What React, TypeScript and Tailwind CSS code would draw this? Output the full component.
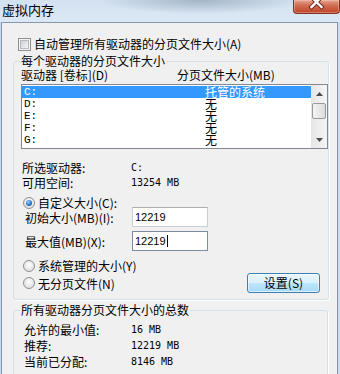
import React from "react";

const cjk = "font-['Noto_Sans_CJK_SC',sans-serif]";
const mono = "font-['DejaVu_Sans_Mono',monospace] text-[10px]";

function Checkbox() {
  return (
    <span className="block w-[13px] h-[13px] shrink-0 border border-[#8e8f8f] bg-[#f4f4f4] p-[1px]">
      <span className="block w-full h-full border border-[#b6babf] bg-[linear-gradient(135deg,#cbd0d6,#f6f6f6)]" />
    </span>
  );
}

function Radio({ checked = false }: { checked?: boolean }) {
  return (
    <span className="flex items-center justify-center w-[12px] h-[12px] shrink-0 rounded-full border border-[#8e8f8f] bg-[radial-gradient(circle_at_50%_40%,#ffffff,#d6d6d6)]">
      {checked && (
        <span className="block w-[6px] h-[6px] rounded-full bg-[radial-gradient(circle_at_40%_35%,#9fd2ff,#2775c9_55%,#0d3f7a)]" />
      )}
    </span>
  );
}

function Arrow({ up }: { up?: boolean }) {
  return (
    <svg width="7" height="4" viewBox="0 0 7 4">
      <path d={up ? "M0 4 L3.5 0 L7 4 Z" : "M0 0 L3.5 4 L7 0 Z"} fill="#4d4d4d" />
    </svg>
  );
}

function TitleBar() {
  return (
    <div className="h-[22px] flex justify-between items-start bg-[radial-gradient(ellipse_100px_14px_at_200px_0px,#a3b5c8,transparent),linear-gradient(#d3e1f0,#dce8f5)]">
      <span className="pl-[2px] text-[13px] leading-[20px] text-black">虚拟内存</span>
      <div className="w-[47px] h-[14px] rounded-b-[4px] border border-t-0 border-[#7d3426] bg-[linear-gradient(#e6a593,#d06a4f_45%,#c0432a)] shadow-[inset_0_0_0_1px_rgba(255,220,200,0.35)]">
        <svg width="45" height="13" viewBox="0 0 45 13">
          <path d="M17.5 -3 L27.5 7 M27.5 -3 L17.5 7" stroke="#6a2519" strokeWidth="4.2" strokeLinecap="square" />
          <path d="M17.5 -3 L27.5 7 M27.5 -3 L17.5 7" stroke="#ffffff" strokeWidth="2.4" strokeLinecap="square" />
        </svg>
      </div>
    </div>
  );
}

const drives = [
  { d: "C:", size: "托管的系统", sel: true },
  { d: "D:", size: "无" },
  { d: "E:", size: "无" },
  { d: "F:", size: "无" },
  { d: "G:", size: "无" },
];

function DriveList() {
  return (
    <div className="mt-[3px] ml-[1px] w-[307px] h-[65px] border border-[#828790] bg-white flex">
      <div className="flex-1 pt-[1px] flex flex-col">
        {drives.map((row) => (
          <div
            key={row.d}
            className={`h-[12px] leading-[12px] flex items-center pl-[2px] ${row.sel ? "bg-[#3399ff] text-white" : "text-black"}`}
          >
            <span className="w-[181px] font-['Liberation_Mono',monospace] text-[11px]">{row.d}</span>
            <span>{row.size}</span>
          </div>
        ))}
      </div>
      <div className="w-[16px] flex flex-col bg-[linear-gradient(90deg,#e6e6e6,#f5f5f5)]">
        <div className="h-[17px] flex items-center justify-center">
          <Arrow up />
        </div>
        <div className="mt-[1px] mx-[1px] h-[16px] rounded-[2px] border border-[#9a9a9a] bg-[linear-gradient(90deg,#f4f4f4,#dcdcdc)]" />
        <div className="flex-1" />
        <div className="h-[17px] flex items-center justify-center">
          <Arrow />
        </div>
      </div>
    </div>
  );
}

function TextBox({ value, focused }: { value: string; focused?: boolean }) {
  return (
    <div
      className={`w-[76px] h-[20px] bg-white flex items-center pl-[2px] border ${focused ? "border-[#7b8ba0]" : "border-[#c9ced6] border-t-[#abadb3]"}`}
    >
      <span className="font-['Liberation_Sans',sans-serif] text-[11px] leading-[12px]">{value}</span>
      {focused && <span className="ml-[1px] w-px h-[12px] bg-black" />}
    </div>
  );
}

export default function App() {
  return (
    <div className={`w-[340px] h-[374px] overflow-hidden flex flex-col bg-[#c8daee] text-[12px] text-black ${cjk}`}>
      <TitleBar />
      <div className="ml-[1px] w-[337px] flex-1 min-h-0 overflow-hidden border-t border-l border-r border-[#8797aa] bg-[#f0f0f0] flex flex-col">
        <div className="mt-[14px] pl-[16px] h-[14px] flex items-center gap-[3px] leading-[14px]">
          <Checkbox />
          <span>自动管理所有驱动器的分页文件大小(A)</span>
        </div>

        <fieldset className="mt-[3px] ml-[11px] w-[316px] pl-[6px] pb-[6px] border border-[#d5dfe5] rounded-[3px] shadow-[1px_1px_0_#ffffff]">
          <legend className="px-[1px] h-[14px] leading-[14px]">每个驱动器的分页文件大小</legend>
          <div className="ml-[1px] flex leading-[13px]">
            <span className="w-[156px]">驱动器 [卷标](D)</span>
            <span>分页文件大小(MB)</span>
          </div>
          <DriveList />

          <div className="mt-[11px] ml-[2px] flex flex-col leading-[15px]">
            <div className="flex">
              <span className="w-[109px]">所选驱动器:</span>
              <span className={mono}>C:</span>
            </div>
            <div className="flex">
              <span className="w-[109px]">可用空间:</span>
              <span className={mono}>13254 MB</span>
            </div>
          </div>

          <div className="mt-[5px] ml-[3px] h-[15px] flex items-center gap-[3px] leading-[15px]">
            <Radio checked />
            <span>自定义大小(C):</span>
          </div>
          <div className="-mt-[3px] flex items-start">
            <span className="ml-[5px] mt-[3px] w-[107px] leading-[15px]">初始大小(MB)(I):</span>
            <TextBox value="12219" />
          </div>
          <div className="mt-[4px] flex items-start">
            <span className="ml-[5px] mt-[3px] w-[107px] leading-[15px]">最大值(MB)(X):</span>
            <TextBox value="12219" focused />
          </div>

          <div className="mt-[7px] ml-[3px] h-[15px] flex items-center gap-[3px] leading-[15px]">
            <Radio />
            <span>系统管理的大小(Y)</span>
          </div>
          <div className="ml-[3px] h-[20px] flex items-center">
            <Radio />
            <span className="ml-[3px] leading-[15px]">无分页文件(N)</span>
            <button className="ml-auto mr-[8px] w-[73px] h-[20px] rounded-[3px] border border-[#3c7fb1] bg-[linear-gradient(#eaf6fd,#d9f0fc_50%,#bee6fd_51%,#a7d9f5)] shadow-[inset_0_0_0_1px_rgba(255,255,255,0.6)] leading-[16px] text-[12px]">
              设置(S)
            </button>
          </div>
        </fieldset>

        <fieldset className="mt-[3px] ml-[11px] w-[315px] pl-[6px] pb-[12px] border border-[#d5dfe5] rounded-[3px] shadow-[1px_1px_0_#ffffff]">
          <legend className="px-[1px] h-[14px] leading-[14px]">所有驱动器分页文件大小的总数</legend>
          <div className="mt-[5px] ml-[4px] flex flex-col leading-[16px]">
            <div className="flex">
              <span className="w-[107px]">允许的最小值:</span>
              <span className={mono}>16 MB</span>
            </div>
            <div className="flex">
              <span className="w-[107px]">推荐:</span>
              <span className={mono}>12219 MB</span>
            </div>
            <div className="flex">
              <span className="w-[107px]">当前已分配:</span>
              <span className={mono}>8146 MB</span>
            </div>
          </div>
        </fieldset>
      </div>
    </div>
  );
}
